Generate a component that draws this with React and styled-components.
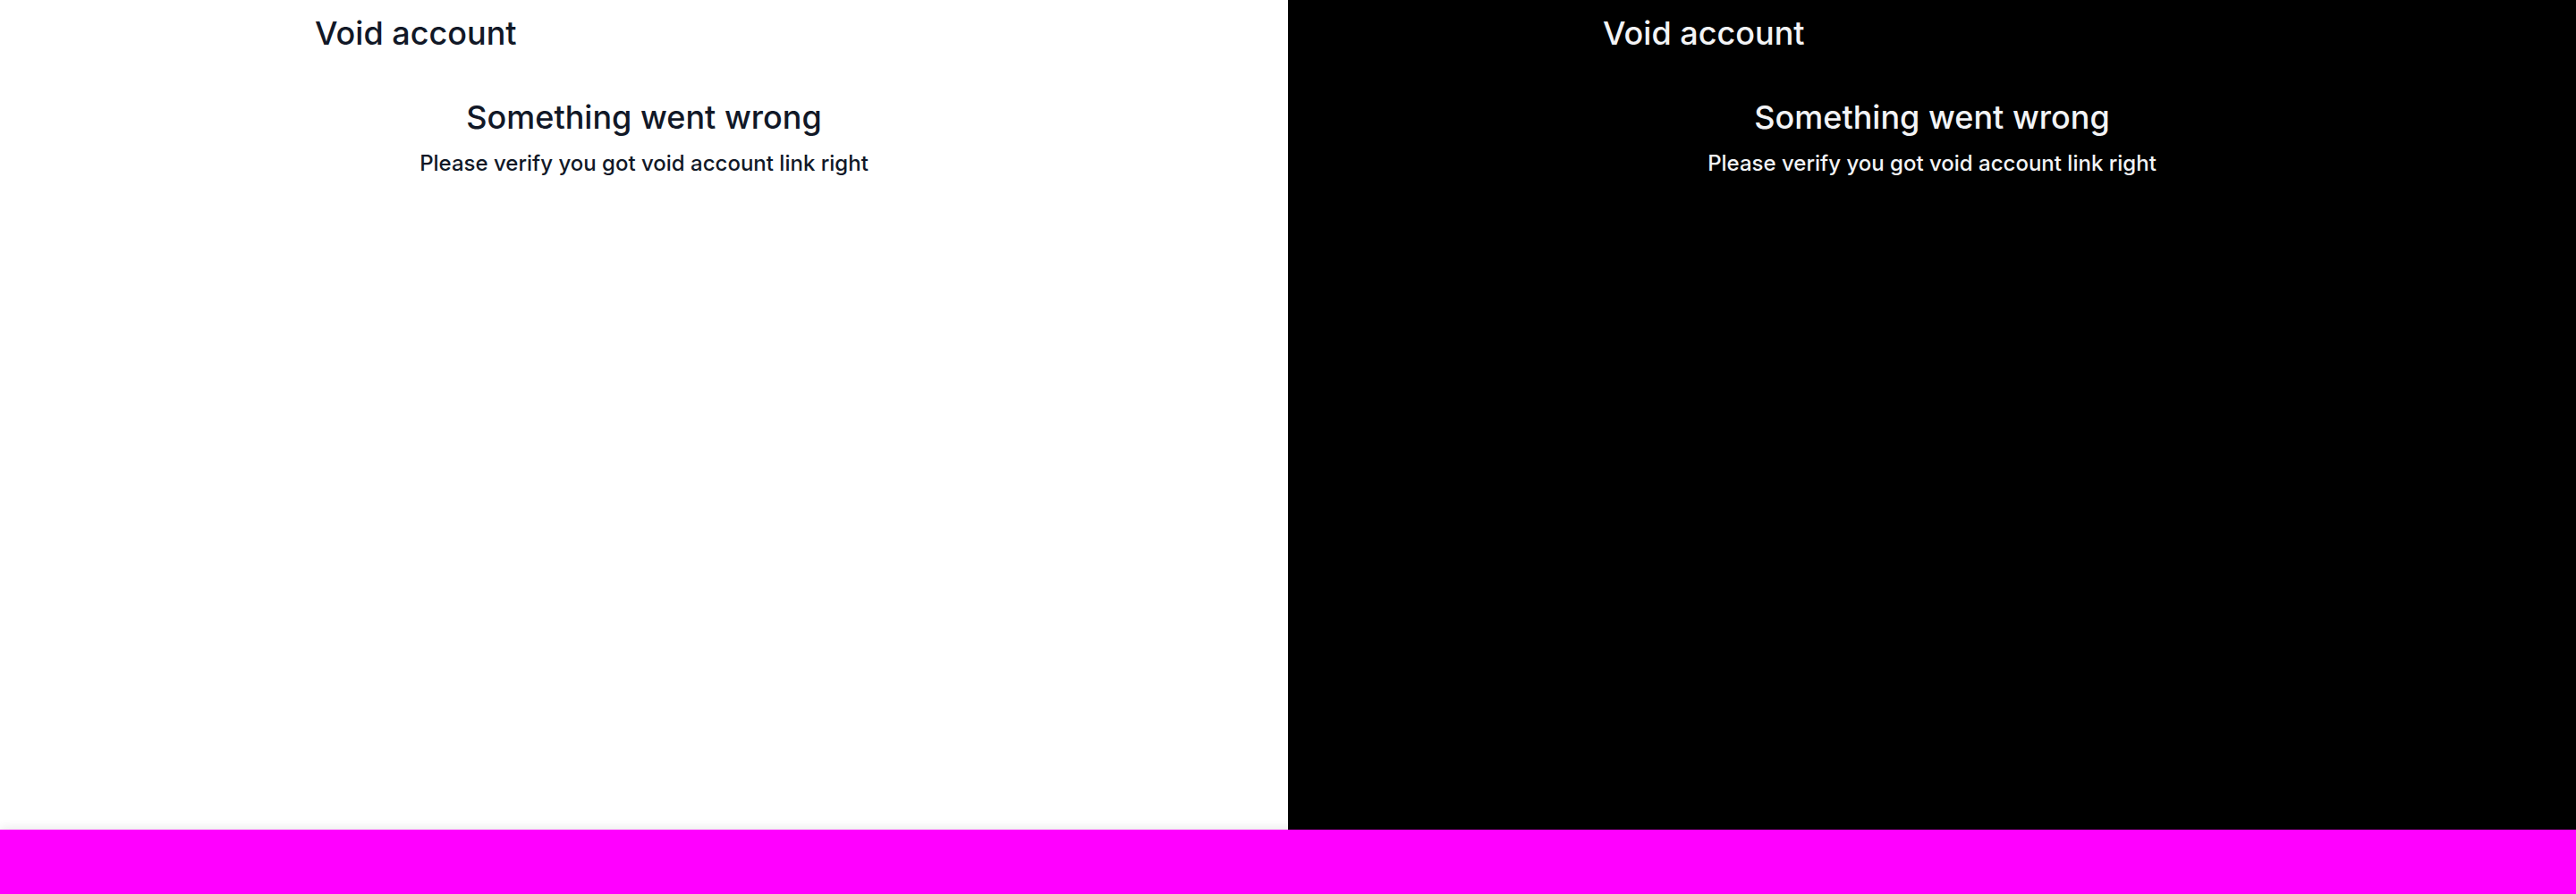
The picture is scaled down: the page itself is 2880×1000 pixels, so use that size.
import React from 'react';
import styled, { createGlobalStyle } from 'styled-components';

const GlobalStyle = createGlobalStyle`
  html, body {
    margin: 0;
    padding: 0;
    overflow: hidden;
  }
  body {
    font-family: 'Inter', 'Liberation Sans', sans-serif;
  }
`;

const themes = {
  light: { bg: '#ffffff', text: '#111827' },
  dark: { bg: '#000000', text: '#f3f4f6' },
};

const VoidAccountPage = ({ mode }) => {
  const theme = themes[mode];
  return (
    <Panel $bg={theme.bg} $color={theme.text}>
      <Container>
        <Header>Void account</Header>
        <ErrorBox>
          <ErrorTitle>Something went wrong</ErrorTitle>
          <ErrorText>Please verify you got void account link right</ErrorText>
        </ErrorBox>
      </Container>
    </Panel>
  );
};

const App = () => (
  <>
    <GlobalStyle />
    <Page>
      <Split>
        <VoidAccountPage mode="light" />
        <VoidAccountPage mode="dark" />
      </Split>
      <Footer />
    </Page>
  </>
);

// Styled Components
const Page = styled.div`
  display: flex;
  flex-direction: column;
  width: 2880px;
  height: 1000px;
`;

const Split = styled.div`
  display: flex;
  height: 928px;
`;

const Panel = styled.div`
  flex: 1;
  background-color: ${props => props.$bg};
  color: ${props => props.$color};
`;

const Container = styled.div`
  max-width: 768px;
  margin: 0 auto;
  padding: 17px 16px 0;
  box-sizing: border-box;
`;

const Header = styled.h1`
  margin: 0;
  font-size: 36px;
  line-height: 40px;
  font-weight: 500;
`;

const ErrorBox = styled.div`
  display: flex;
  flex-direction: column;
  align-items: center;
  margin-top: 54px;
  gap: 16px;
`;

const ErrorTitle = styled.h2`
  margin: 0;
  font-size: 36px;
  line-height: 40px;
  font-weight: 500;
`;

const ErrorText = styled.p`
  margin: 0;
  font-size: 24px;
  line-height: 32px;
  font-weight: 500;
`;

const Footer = styled.div`
  height: 72px;
  background-color: #ff00ff;
  box-shadow: 0 0 12px rgba(0, 0, 0, 0.12);
`;

export default App;
